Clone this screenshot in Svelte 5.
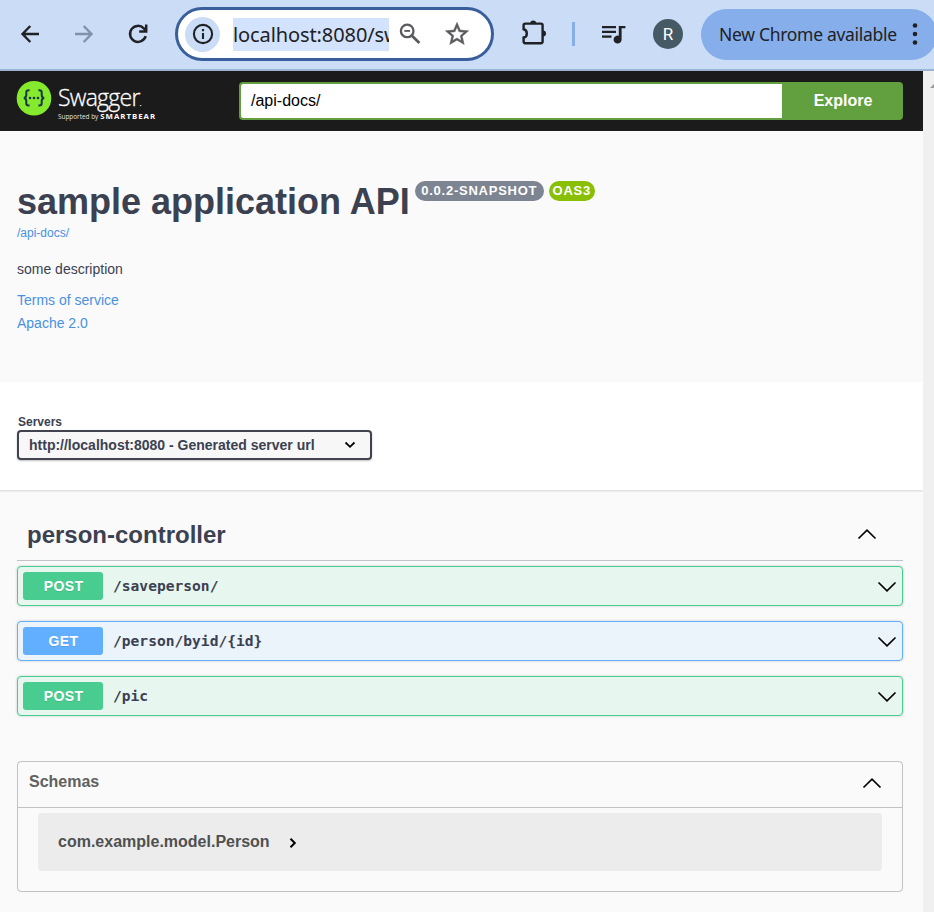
<script>
  const operations = [
    { method: 'POST', path: '/saveperson/' },
    { method: 'GET', path: '/person/byid/{id}' },
    { method: 'POST', path: '/pic' }
  ];
</script>

{#snippet chevron(up)}
  <svg class="chevron" class:up width="20" height="12" viewBox="0 0 20 12">
    <path d="M1.5 1.5 10 9.8 18.5 1.5" fill="none" stroke="#000" stroke-width="1.7" />
  </svg>
{/snippet}

<div class="window">
  <header class="toolbar">
    <svg class="back" width="30" height="30" viewBox="0 0 30 30" fill="none" stroke="#202124" stroke-width="2.4">
      <path d="M24 15H7.5M15.3 7 7.5 15l7.8 8" />
    </svg>
    <svg class="forward" width="30" height="30" viewBox="0 0 30 30" fill="none" stroke="#8191aa" stroke-width="2.4">
      <path d="M6 15h16.5M14.7 7l7.8 8-7.8 8" />
    </svg>
    <svg class="reload" width="30" height="30" viewBox="0 0 30 30" fill="none" stroke="#202124" stroke-width="2.5">
      <path d="M22.7 17.2A8 8 0 1 1 20.8 9.3L23 11.5" />
      <path d="M23.2 5.5v7h-7" />
    </svg>
    <div class="omnibox">
      <span class="info">
        <svg width="24" height="24" viewBox="0 0 24 24" fill="none" stroke="#202124">
          <circle cx="12" cy="12" r="9.1" stroke-width="2.1" />
          <path d="M12 11v6M12 7v2.2" stroke-width="2.1" />
        </svg>
      </span>
      <span class="address">localhost:8080/sw</span>
      <svg class="lens" width="24" height="24" viewBox="0 0 24 24" fill="none" stroke="#5a5b5e">
        <circle cx="9.2" cy="8.9" r="6.3" stroke-width="2.3" />
        <path d="M6.3 8.9h5.8" stroke-width="1.9" />
        <path d="M13.7 13.4l7.7 7.7" stroke-width="2.8" />
      </svg>
      <svg class="star" width="28" height="28" viewBox="0 0 24 24" fill="#5a5b5e" stroke="#5a5b5e" stroke-width=".4">
        <path d="m22 9.24-7.19-.62L12 2 9.19 8.63 2 9.24l5.46 4.73L5.82 21 12 17.27 18.18 21l-1.63-7.03L22 9.24zM12 15.4l-3.76 2.27 1-4.28-3.32-2.88 4.38-.38L12 6.1l1.71 4.04 4.38.38-3.32 2.88 1 4.28L12 15.4z" />
      </svg>
    </div>
    <svg class="puzzle" width="28" height="28" viewBox="0 0 28 28">
      <path d="M5.2 4.6H21a1.6 1.6 0 0 1 1.6 1.6v16.4a1.6 1.6 0 0 1-1.6 1.6H5.2a1.6 1.6 0 0 1-1.6-1.6v-4.1c2-.3 3.2-2 3.2-4.1s-1.2-3.8-3.2-4.1V6.2a1.6 1.6 0 0 1 1.6-1.6z" fill="none" stroke="#202124" stroke-width="2.4" />
      <path d="M10.2 4.4a3 3 0 0 1 6 0zM23 11.4a3 3 0 0 1 0 6z" fill="#202124" />
    </svg>
    <span class="divider"></span>
    <svg class="queue" width="26" height="22" viewBox="0 0 26 22" fill="#202124">
      <path d="M1 3h14v2.2H1zM1 7.8h14V10H1zM1 12.6h9.5v2.2H1zM17.8 3h6.6v2.3h-3.800v11.300a4 4 0 1 1-2.800-3.800z" />
    </svg>
    <span class="avatar">R</span>
    <div class="update">
      <span>New Chrome available</span>
      <svg width="6" height="24" viewBox="0 0 6 24" fill="#202124">
        <circle cx="3" cy="3.5" r="2.3" /><circle cx="3" cy="12" r="2.3" /><circle cx="3" cy="20.5" r="2.3" />
      </svg>
    </div>
  </header>

  <div class="viewport">
    <main>
      <div class="topbar">
        <svg class="logo" width="36" height="36" viewBox="0 0 36 36">
          <circle cx="18" cy="18.3" r="17.3" fill="#85ea2d" />
          <g fill="none" stroke="#173647" stroke-width="2">
            <path d="M13.6 10.2h-1c-1.7 0-2.3.8-2.3 2.3v2.4c0 1.8-.8 2.7-2.4 3 1.6.3 2.4 1.2 2.4 3v2.4c0 1.5.6 2.3 2.3 2.3h1" />
            <path d="M22.4 10.2h1c1.7 0 2.3.8 2.3 2.3v2.4c0 1.8.8 2.7 2.4 3-1.6.3-2.4 1.2-2.4 3v2.4c0 1.5-.6 2.3-2.3 2.3h-1" />
          </g>
          <g fill="#173647"><circle cx="14" cy="18" r="1.3" /><circle cx="18" cy="18" r="1.3" /><circle cx="22" cy="18" r="1.3" /></g>
        </svg>
        <div class="brand">
          <div class="name">Swagger<i>.</i></div>
          <div class="byline"><span>Supported by</span><b>SMARTBEAR</b></div>
        </div>
        <div class="search">
          <div class="field">/api-docs/</div>
          <div class="explore">Explore</div>
        </div>
      </div>

      <section class="intro">
        <h1><span class="title">sample application API</span><span class="badge version">0.0.2-SNAPSHOT</span><span class="badge oas">OAS3</span></h1>
        <a class="spec" href="#docs">/api-docs/</a>
        <p>some description</p>
        <a href="#terms">Terms of service</a>
        <a href="#license">Apache 2.0</a>
      </section>

      <section class="servers">
        <div class="label">Servers</div>
        <div class="select">
          <span>http://localhost:8080 - Generated server url</span>
          <svg width="12" height="8" viewBox="0 0 12 8"><path d="M1.5 1.5 6 5.8l4.500-4.300" fill="none" stroke="#000" stroke-width="1.8" /></svg>
        </div>
      </section>

      <section class="operations">
        <h2><span>person-controller</span>{@render chevron(true)}</h2>
        {#each operations as op}
          <div class="op {op.method.toLowerCase()}">
            <span class="method">{op.method}</span>
            <code>{op.path}</code>
            {@render chevron(false)}
          </div>
        {/each}
      </section>

      <section class="schemas">
        <h3><span>Schemas</span>{@render chevron(true)}</h3>
        <div class="model">
          <span>com.example.model.Person</span>
          <svg width="8" height="12" viewBox="0 0 8 12"><path d="M1.5 1.8 5.8 6l-4.300 4.200" fill="none" stroke="#000" stroke-width="2" /></svg>
        </div>
      </section>
    </main>
    <div class="scrollbar"><i></i></div>
  </div>
</div>

<style>
  :global(body) { margin: 0; overflow: hidden; }
  * { box-sizing: border-box; }
  svg { display: block; flex: none; }
  .window { width: 934px; height: 912px; overflow: hidden; background: #fafafa; font-family: "Liberation Sans", Arial, sans-serif; color: #3b4151; }
  .toolbar { height: 71px; display: flex; align-items: center; padding: 0 0 1px 15px; background: #cbdcf6; border-bottom: 2px solid #9fb2d2; white-space: nowrap; }
  .forward { margin-left: 24px; }
  .reload { margin-left: 24px; }
  .omnibox { width: 319px; height: 54px; margin-left: 22px; flex: none; border: 3px solid #385f9b; border-radius: 27px; background: #fff; display: flex; align-items: center; padding-left: 7px; }
  .info { width: 35px; height: 35px; border-radius: 50%; background: #cbdcf6; display: flex; align-items: center; justify-content: center; flex: none; }
  .address { width: 156px; height: 33px; margin-left: 13px; overflow: hidden; background: #d3e2fd; color: #202124; font: 20px/34px "Noto Sans", sans-serif; letter-spacing: -0.1px; flex: none; }
  .lens { margin-left: 9px; }
  .star { margin-left: 21px; }
  .puzzle { margin-left: 26px; margin-bottom: 2px; }
  .divider { width: 3px; height: 24px; margin-left: 24px; background: #86afea; flex: none; }
  .queue { margin-left: 26px; margin-bottom: 1px; }
  .avatar { width: 30px; height: 30px; margin-left: 26px; border-radius: 50%; background: #455a64; color: #fff; font: 17px/30px Roboto, sans-serif; text-align: center; flex: none; }
  .update { width: 236px; height: 51px; margin-left: 18px; border-radius: 25.5px; background: #86aeea; display: flex; align-items: center; padding-left: 18px; flex: none; color: #202124; font: 17.5px/51px "Noto Sans", sans-serif; }
  .update span { width: 178px; letter-spacing: -0.3px; }
  .update svg { margin-left: 15px; }

  .viewport { display: flex; height: 841px; }
  main { width: 923px; flex: none; }
  .scrollbar { width: 11px; background: #f0f0f0; padding: 12px 0 0 7px; overflow: hidden; }
  .scrollbar i { display: block; width: 10px; height: 5px; background: #9b9b9b; clip-path: polygon(50% 0, 100% 100%, 0 100%); }

  .topbar { height: 60px; background: #1b1b1b; display: flex; padding: 9px 20px 0 16px; }
  .brand { width: 187px; padding-left: 6px; color: #fff; white-space: nowrap; }
  .name { height: 32px; font: 300 23px/35px "Open Sans", "Noto Sans", sans-serif; letter-spacing: -0.75px; -webkit-text-stroke: .3px #fff; }
  .name i { font-size: 9px; font-style: normal; }
  .byline { display: flex; gap: 2px; font: 6.4px/9px "Open Sans", sans-serif; color: #e2e2e2; }
  .byline b { font-size: 7.8px; letter-spacing: 1px; color: #fff; }
  .search { display: flex; width: 664px; height: 38px; margin-top: 2px; font-size: 16px; line-height: 34px; }
  .field { width: 543px; border: 2px solid #62a03f; border-right: 0; border-radius: 4px 0 0 4px; background: #fff; color: #000; padding-left: 10px; }
  .explore { width: 121px; border-radius: 0 4px 4px 0; background: #62a03f; color: #fff; font-weight: bold; line-height: 37px; text-align: center; padding-left: 1px; }

  .intro { height: 251px; padding: 49px 17px 0; }
  .intro a { display: block; width: max-content; color: #4990e2; text-decoration: none; font-size: 14px; line-height: 23px; }
  h1 { display: flex; align-items: flex-start; margin: 0; height: 46px; font-size: 36px; line-height: 44px; white-space: nowrap; }
  .badge { height: 20px; margin-top: 1px; border-radius: 10px; color: #fff; font-size: 13px; line-height: 20px; text-align: center; }
  .version { width: 129px; margin-left: 5px; background: #7d8492; letter-spacing: 0.75px; }
  .oas { width: 46px; margin-left: 5px; background: #89bf04; letter-spacing: 0.75px; }
  .intro .spec { font-size: 12px; line-height: 14px; }
  p { margin: 21px 0 11px; font-size: 14px; line-height: 17px; height: 17px; }

  .servers { height: 108px; padding: 33px 17px 0; background: #fff; box-shadow: 0 1px 2px rgba(0,0,0,.15); }
  .label { padding-left: 1px; font-size: 12px; line-height: 15px; font-weight: bold; }
  .select { width: 355px; height: 30px; border: 2px solid #41444e; border-radius: 4px; background: #f7f7f7; box-shadow: 0 1px 2px rgba(0,0,0,.25); display: flex; align-items: center; justify-content: space-between; padding: 0 14px 0 10px; font-size: 14px; font-weight: bold; white-space: nowrap; }

  .operations { padding: 20px 20px 0 17px; }
  h2 { display: flex; align-items: center; justify-content: space-between; height: 51px; margin: 0 0 5px; padding: 0 26px 1px 10px; border-bottom: 1px solid rgba(59,65,81,.3); font-size: 24px; }
  h2 .chevron { margin-bottom: 2px; }
  .up { transform: rotate(180deg); }
  .op { display: flex; align-items: center; height: 40px; margin-bottom: 15px; padding: 0 5px; border: 1px solid #49cc90; border-radius: 4px; background: #e8f6f0; box-shadow: 0 0 3px rgba(0,0,0,.19); }
  .op .chevron { margin-left: auto; margin-top: 1px; }
  .method { width: 80px; height: 28px; border-radius: 3px; background: #49cc90; color: #fff; font-size: 14px; font-weight: bold; line-height: 28px; text-align: center; text-shadow: 0 1px 0 rgba(0,0,0,.1); letter-spacing: 0.4px; padding-left: 1px; }
  .get { border-color: #61affe; background: #ebf3fb; }
  .get .method { background: #61affe; }
  code { margin: 0 0 2px 10px; font: bold 14.6px "DejaVu Sans Mono", monospace; }

  .schemas { width: 886px; height: 131px; margin: 45px 0 0 17px; border: 1px solid rgba(59,65,81,.3); border-radius: 4px; }
  h3 { display: flex; align-items: center; justify-content: space-between; margin: 0; height: 46px; padding: 0 20px 5px 11px; border-bottom: 1px solid rgba(59,65,81,.3); color: #606060; font-size: 16px; }
  h3 .chevron { margin-top: 2px; }
  .model { display: flex; align-items: center; gap: 19px; height: 58px; margin: 5px 20px 0; padding-left: 20px; border-radius: 4px; background: #ececec; color: #505050; font-size: 16px; font-weight: bold; }
  .model svg { margin-top: 2px; }
</style>
